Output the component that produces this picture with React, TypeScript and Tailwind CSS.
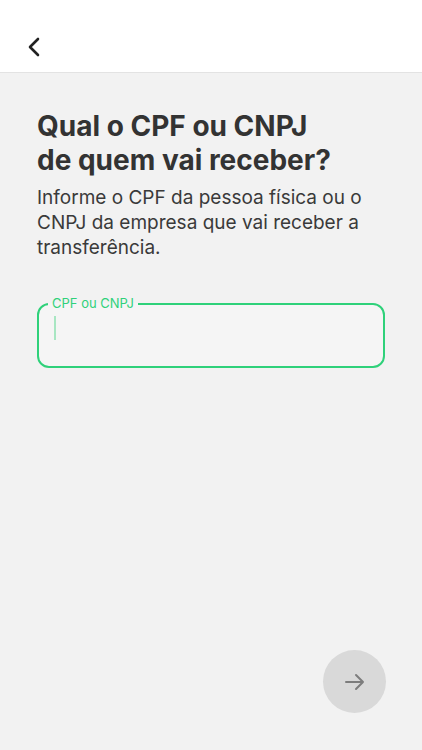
import React from 'react';

const font = { fontFamily: 'Inter, "Liberation Sans", Arial, sans-serif' };

export default function App() {
  return (
    <div className="w-[422px] h-[750px] flex flex-col bg-[#f2f2f2] text-[#333333]" style={font}>
      {/* cabeçalho */}
      <header className="h-[73px] shrink-0 bg-white border-b border-[#e3e3e3] flex items-center pl-[26px] pt-[22px]">
        <svg width="16" height="20" viewBox="0 0 16 20" fill="none">
          <path d="M12 2 L4 10 L12 18" stroke="#222222" strokeWidth="2.6" strokeLinecap="round" strokeLinejoin="round" />
        </svg>
      </header>

      <main className="flex-1 flex flex-col px-[37px] pt-[36px]">
        <h1 className="text-[28px] leading-[34px] font-bold text-[#333333]">
          Qual o CPF ou CNPJ
          <br />
          de quem vai receber?
        </h1>
        <p className="mt-[8px] text-[19px] leading-[25px] text-[#3a3a3a]">
          Informe o CPF da pessoa física ou o CNPJ da empresa que vai receber a transferência.
        </p>

        <fieldset className="mt-[36px] h-[72px] w-[348px] border-2 border-[#2fd17a] rounded-[12px] bg-[#f5f5f5] px-[14px]">
          <legend className="ml-[-5px] px-[4px] text-[13px] leading-[15px] text-[#2fd17a]">CPF ou CNPJ</legend>
          <div className="mt-[5px] w-[1.5px] h-[24px] bg-[#a8e6c2] ml-[1px]" />
        </fieldset>

        <div className="flex-1" />

        <div className="flex justify-end pb-[37px] -mr-[1px]">
          <button className="w-[63px] h-[63px] rounded-full bg-[#d9d9d9] flex items-center justify-center">
            <svg width="22" height="20" viewBox="0 0 22 20" fill="none">
              <path d="M2 10 H19 M12 3 L19 10 L12 17" stroke="#7d7d7d" strokeWidth="2" strokeLinecap="round" strokeLinejoin="round" />
            </svg>
          </button>
        </div>
      </main>
    </div>
  );
}
